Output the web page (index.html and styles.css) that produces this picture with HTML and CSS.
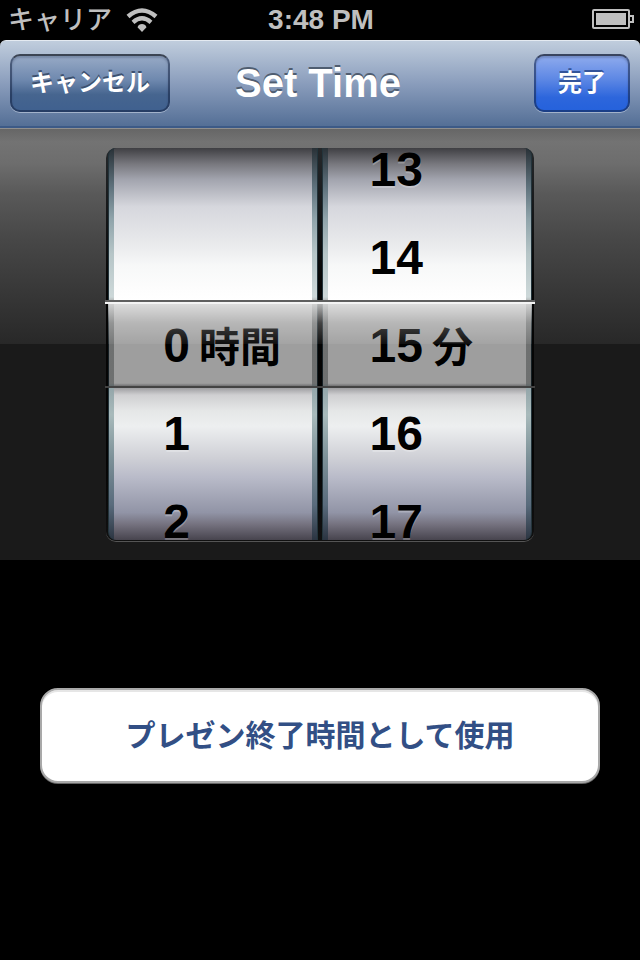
FILE: index.html
```html
<!DOCTYPE html>
<html lang="ja">
<head>
<meta charset="utf-8">
<meta name="viewport" content="width=device-width">
<title>Set Time</title>
<link rel="stylesheet" href="styles.css">
</head>
<body>
<div class="status">
  <div class="status-left">
    <span class="carrier">キャリア</span>
    <svg class="wifi" viewBox="0 0 32 24" aria-hidden="true">
      <path d="M2 8.500Q16 -3.500 30 8.500" fill="none" stroke="#bfbfbf" stroke-width="4.500"/>
      <path d="M7 14.300Q16 6.300 25 14.300" fill="none" stroke="#bfbfbf" stroke-width="4.300"/>
      <path d="M16 24L11.500 19.300Q12.800 16 16 16Q19.200 16 20.500 19.300Z" fill="#bfbfbf"/>
    </svg>
  </div>
  <span class="clock">3:48 PM</span>
  <div class="status-right">
    <svg class="battery" viewBox="0 0 42 20" aria-hidden="true">
      <rect x="1" y="1" width="36" height="18" rx="1" fill="none" stroke="#bfbfbf" stroke-width="2"/>
      <rect x="4" y="4" width="30" height="12" fill="#bfbfbf"/>
      <path d="M38 7H41V13H38" fill="none" stroke="#bfbfbf" stroke-width="2"/>
    </svg>
  </div>
</div>
<header class="navbar">
  <button class="bar-button" type="button">キャンセル</button>
  <h1 class="title">Set Time</h1>
  <button class="bar-button done" type="button">完了</button>
</header>
<main>
  <section class="picker">
    <div class="wheels">
      <ul class="wheel hours" role="listbox" aria-label="時間">
        <li class="row"></li>
        <li class="row"></li>
        <li class="row" role="option" aria-selected="true"><span class="num">0</span><span class="unit">時間</span></li>
        <li class="row" role="option"><span class="num">1</span></li>
        <li class="row" role="option"><span class="num">2</span></li>
      </ul>
      <ul class="wheel minutes" role="listbox" aria-label="分">
        <li class="row" role="option"><span class="num">13</span></li>
        <li class="row" role="option"><span class="num">14</span></li>
        <li class="row" role="option" aria-selected="true"><span class="num">15</span><span class="unit">分</span></li>
        <li class="row" role="option"><span class="num">16</span></li>
        <li class="row" role="option"><span class="num">17</span></li>
      </ul>
      <div class="glass"></div>
    </div>
  </section>
  <div class="actions">
    <button class="use-button" type="button">プレゼン終了時間として使用</button>
  </div>
</main>
</body>
</html>
```

FILE: styles.css
```css
* {
  box-sizing: border-box;
}

body {
  margin: 0;
  background: #000;
  font-family: "Liberation Sans", "Noto Sans CJK JP", sans-serif;
  font-weight: bold;
}

button {
  font: inherit;
  cursor: pointer;
}

.status {
  display: grid;
  grid-template-columns: 1fr auto 1fr;
  align-items: center;
  height: 40px;
  padding: 0 6px 0 8px;
  color: #bfbfbf;
  font-size: 28px;
  line-height: 38px;
}

.status-left {
  display: flex;
  align-items: center;
  gap: 14px;
}

.status-right {
  display: flex;
  justify-content: flex-end;
  padding-bottom: 2px;
}

.carrier {
  font-size: 26px;
  font-weight: 500;
}

.wifi {
  width: 32px;
  height: 24px;
}

.battery {
  width: 42px;
  height: 20px;
}

.navbar {
  display: grid;
  grid-template-columns: 1fr auto 1fr;
  align-items: center;
  height: 88px;
  padding: 0 10px 2px;
  border-top: 1px solid #e4eaf1;
  border-bottom: 2px solid #3c5a87;
  border-radius: 6px 6px 0 0;
  background: linear-gradient(#c0cddd, #8a9dbc 50%, #546f96);
}

.title {
  margin: 0;
  padding-right: 4px;
  color: #fff;
  font-size: 40px;
  line-height: 48px;
  text-shadow: 0 -2px 0 #4f5d70;
}

.bar-button {
  justify-self: start;
  height: 58px;
  padding: 0 18px 4px;
  border: 2px solid rgba(20, 35, 65, 0.55);
  border-top-color: rgba(20, 25, 35, 0.7);
  border-radius: 10px;
  background: linear-gradient(#9badc8, #6e88ae 45%, #46658f 70%, #3f608f) border-box;
  box-shadow: 0 1px 0 #a3b3cb, inset 0 2px 2px rgba(30, 45, 75, 0.25);
  color: #fff;
  font-size: 24px;
  text-shadow: 0 -2px 0 #3c506f;
}

.done {
  justify-self: end;
  padding: 0 22px 4px;
  background: linear-gradient(#93aeee, #5b86e4 45%, #2d66dc 75%, #2461dc) border-box;
  text-shadow: 0 -2px 0 #33549a;
}

.picker {
  display: flex;
  justify-content: center;
  padding: 19px 0;
  border-top: 1px solid #8f8f8f;
  background: linear-gradient(#666, #737373 3%, #6d6d6d 8%, #595959 15%, #484848 25%, #282828 215px, #1a1a1a 215px);
}

.wheels {
  position: relative;
  display: flex;
  gap: 4px;
  height: 393px;
  padding: 0 2px 1px;
  border-radius: 10px;
  background: linear-gradient(#25282b, #050505 35%, #050505 80%, #111);
  box-shadow: 0 1px 0 #555;
}

.wheel {
  display: flex;
  flex-direction: column;
  justify-content: center;
  width: 210px;
  height: 392px;
  margin: 0;
  padding: 4px 0 0;
  overflow: hidden;
  list-style: none;
  background:
    linear-gradient(#3f3f43, #77777d 4%, #a2a4ae 8%, #d6d7dd 15%, #eaebed 25%, #f7f8f8 30%, #fdfdfd 36%, #fff 39%, #fff 60%, #98989b 61%, #cfcfd1 63%, #e5e7e7 67%, #edeff0 71%, #cfd0d6 79%, #b9bbc9 84%, #9194a6 93%, #75727f 96%, #47444e) center / 198px 100% no-repeat,
    linear-gradient(#293137, #5f727d 10%, #8fa3aa 18%, #b6c5c7 27%, #cdd8d9 38%, #b2b5b5 39%, #b2b5b5 60%, #93a5a9 61%, #a8babb 68%, #7d9198 79%, #596b7c 91%, #2b3441);
  border: solid #23343b;
  border-width: 0 1px;
}

.hours {
  border-radius: 8px 0 0 8px;
}

.minutes {
  border-radius: 0 8px 8px 0;
}

.row {
  display: flex;
  flex: none;
  align-items: center;
  height: 88px;
  color: #000;
  font-size: 48px;
  line-height: 88px;
  text-shadow: 0 2px 0 rgba(255, 255, 255, 0.25);
}

.row[aria-selected] {
  text-shadow: 0 3px 0 #fff;
}

.num {
  width: 81px;
  text-align: right;
}

.minutes .num {
  width: 100px;
}

.unit {
  margin-left: 9px;
  padding-top: 4px;
  font-size: 41px;
}

.glass {
  position: absolute;
  inset: 152px -1px auto;
  height: 88px;
  border-top: 2px solid #5f5f5f;
  border-bottom: 2px solid #434343;
  background:
    linear-gradient(#f4f4f4, #f4f4f4) top / 100% 2px no-repeat,
    linear-gradient(rgba(240, 240, 240, 0.8), rgba(255, 255, 255, 0.25) 25%, rgba(255, 255, 255, 0.06) 50%, transparent 50%) center / calc(100% - 6px) 100% no-repeat,
    linear-gradient(rgba(0, 0, 0, 0.38), rgba(0, 0, 0, 0.38)) center / calc(100% - 6px) 100% no-repeat;
  background-origin: padding-box;
  background-clip: padding-box;
}

.actions {
  padding: 128px 40px;
}

.use-button {
  display: block;
  width: 100%;
  height: 95px;
  padding: 0 0 6px;
  border: 2px solid #a9a9a9;
  border-radius: 18px;
  background: #fff;
  box-shadow: inset 0 2px 0 #e6e6e6, 0 1px 0 #666;
  color: #324f85;
  font-size: 30px;
}
```
